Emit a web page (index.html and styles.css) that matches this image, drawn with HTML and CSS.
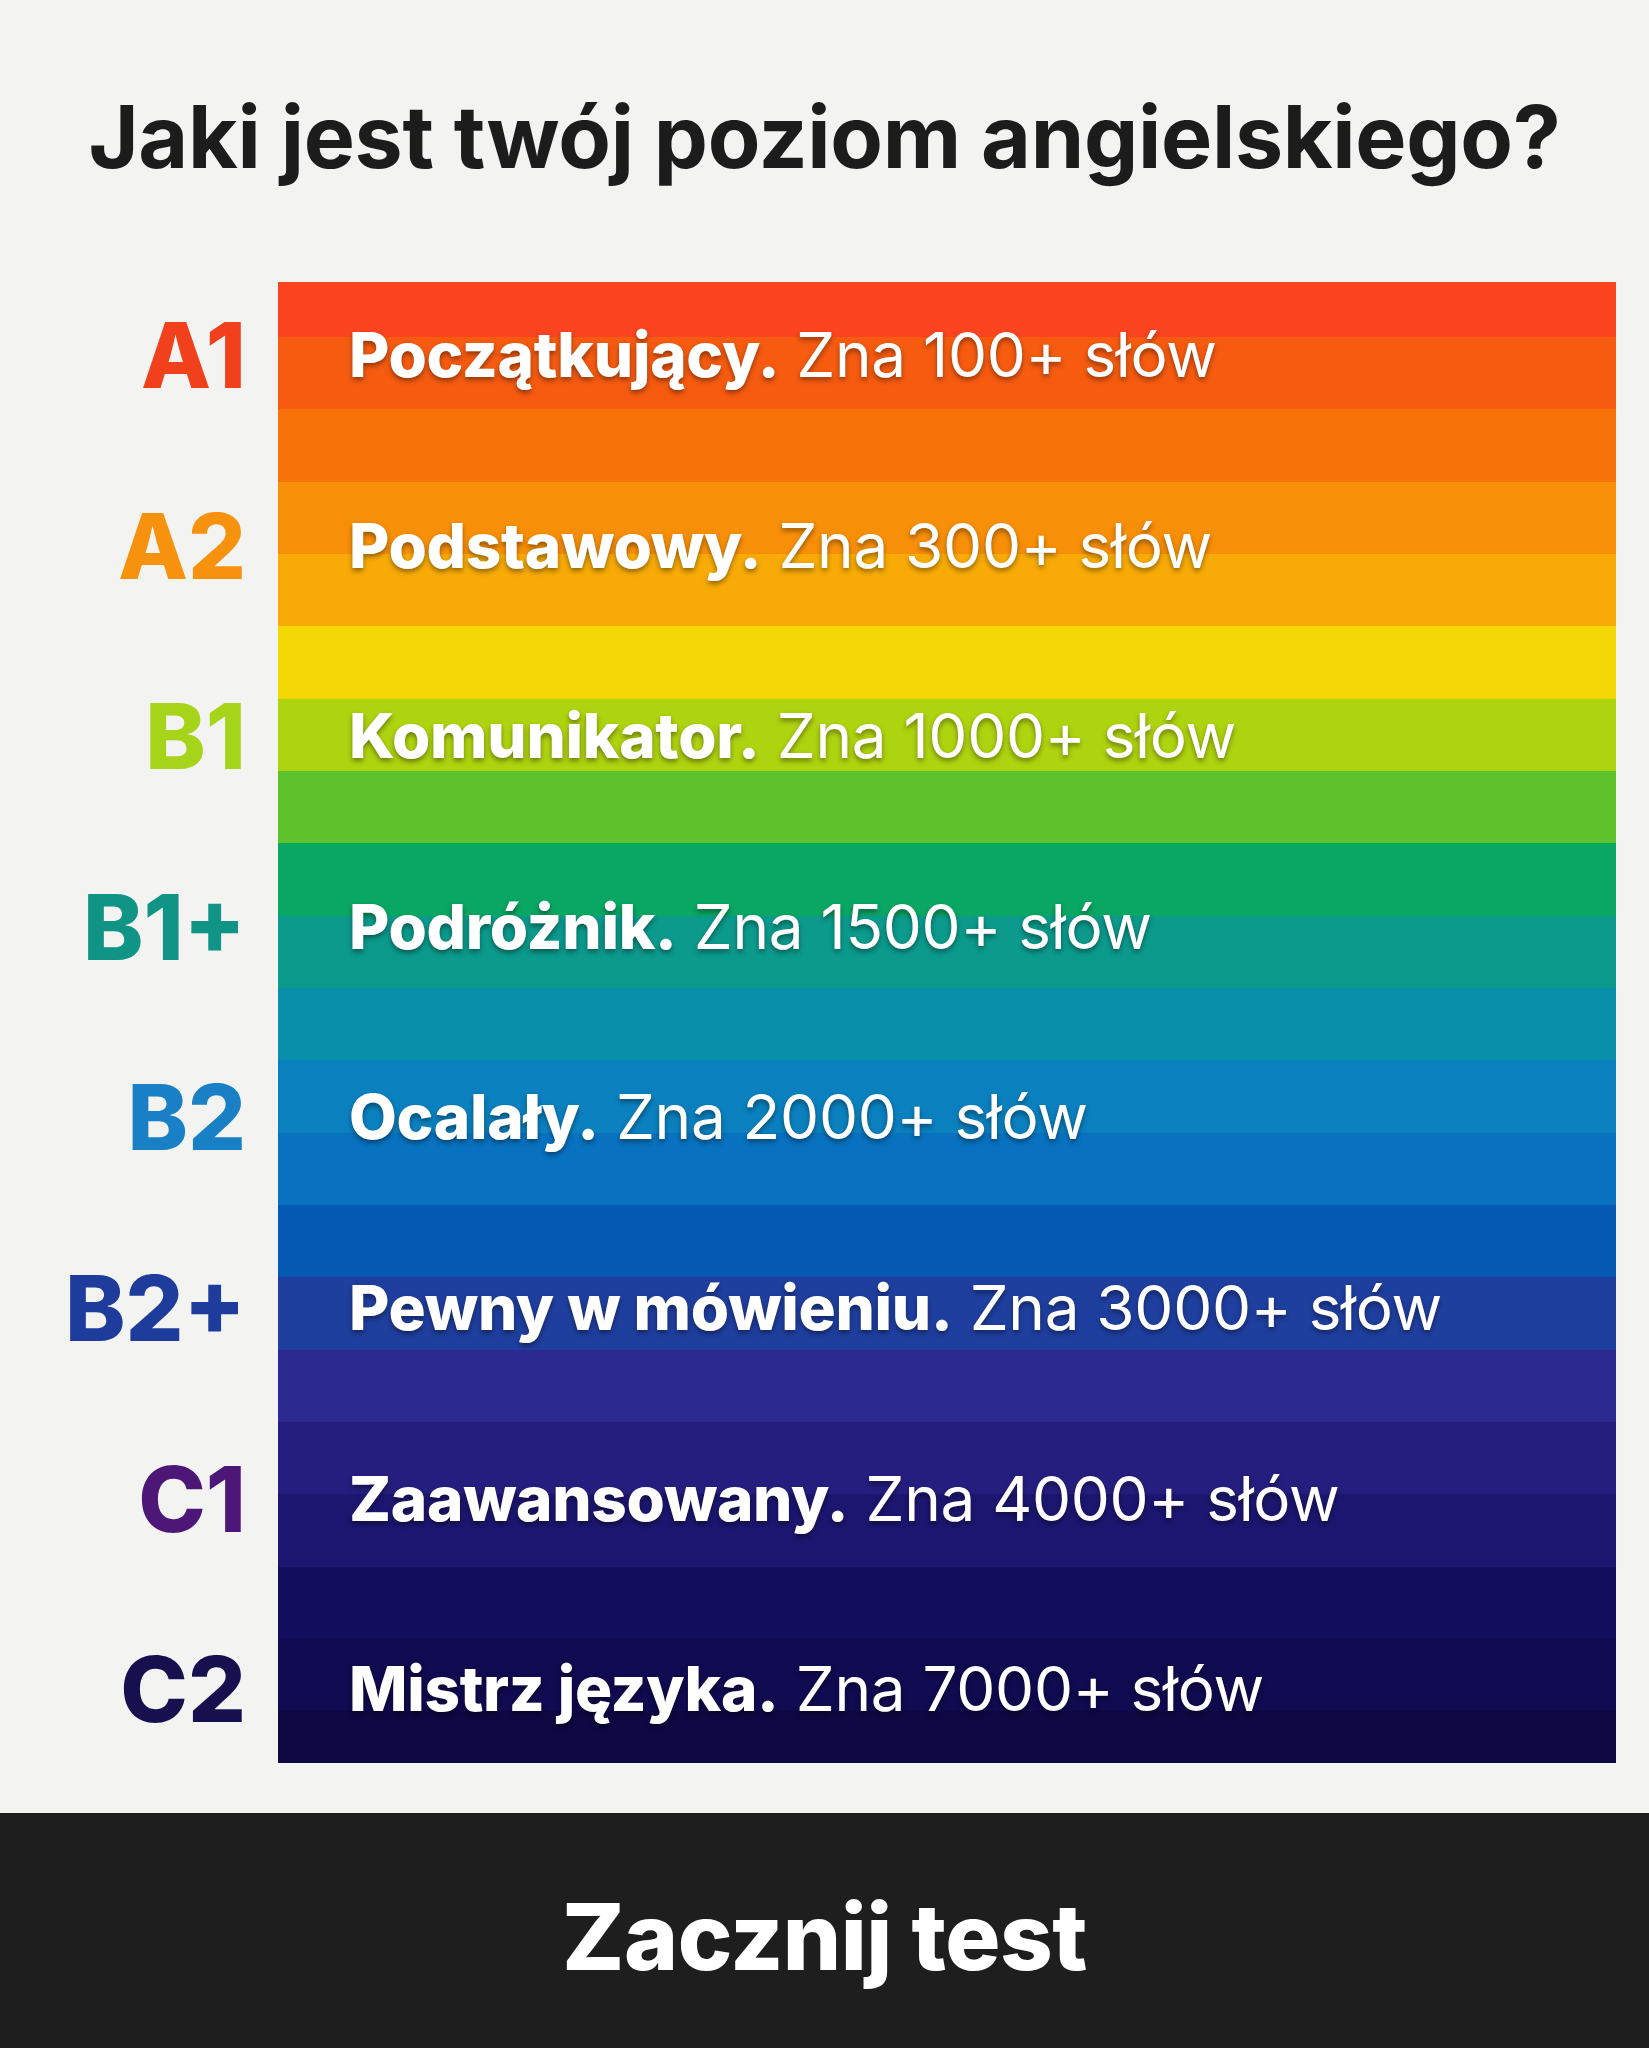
FILE: index.html
```html
<!DOCTYPE html>
<html lang="pl">
<head>
<meta charset="utf-8">
<title>Jaki jest twój poziom angielskiego?</title>
<link rel="stylesheet" href="styles.css">
</head>
<body>
<main class="page">
  <h1 class="title">Jaki jest twój poziom angielskiego?</h1>
  <section class="chart">
    <div class="labels">
      <div class="label a1">A1</div>
      <div class="label a2">A2</div>
      <div class="label b1">B1</div>
      <div class="label b1p">B1+</div>
      <div class="label b2">B2</div>
      <div class="label b2p">B2+</div>
      <div class="label c1">C1</div>
      <div class="label c2">C2</div>
    </div>
    <div class="band">
      <div class="row"><b>Początkujący.</b> Zna 100+ słów</div>
      <div class="row"><b>Podstawowy.</b> Zna 300+ słów</div>
      <div class="row"><b>Komunikator.</b> Zna 1000+ słów</div>
      <div class="row"><b>Podróżnik.</b> Zna 1500+ słów</div>
      <div class="row"><b>Ocalały.</b> Zna 2000+ słów</div>
      <div class="row"><b>Pewny w mówieniu.</b> Zna 3000+ słów</div>
      <div class="row"><b>Zaawansowany.</b> Zna 4000+ słów</div>
      <div class="row"><b>Mistrz języka.</b> Zna 7000+ słów</div>
    </div>
  </section>
  <footer class="cta">
    <span class="cta-text">Zacznij test</span>
  </footer>
</main>
</body>
</html>
```
FILE: styles.css
```css
html, body {
  margin: 0;
  padding: 0;
  background: #f3f3f2;
}
.page {
  display: flex;
  flex-direction: column;
  min-height: 2048px;
  font-family: Inter, "Noto Sans", "Liberation Sans", sans-serif;
}
.title {
  margin: 0;
  padding-top: 95px;
  height: 84px;
  font-size: 86px;
  line-height: 84px;
  font-weight: 700;
  color: #1c1c1c;
  text-align: center;
  letter-spacing: -0.3px;
}
.chart {
  display: flex;
  margin-top: 103px;
  height: 1481px;
}
.labels {
  width: 246px;
  display: flex;
  flex-direction: column;
  gap: 90.6px;
  padding: 23px 0 24px;
  box-sizing: border-box;
}
.label {
  height: 100px;
  line-height: 100px;
  font-size: 91px;
  font-weight: 800;
  text-align: right;
  letter-spacing: 0;
}
.a1 { color: #f1401c; }
.a2 { color: #f7920f; }
.b1 { color: #a6d41a; }
.b1p { color: #0f9486; }
.b2 { color: #1a80c6; }
.b2p { color: #1e3c9c; }
.c1 { color: #4d1778; }
.c2 { color: #17104f; }
.band {
  margin-left: 32px;
  width: 1338px;
  display: flex;
  flex-direction: column;
  gap: 90.6px;
  padding: 23px 0 24px 71px;
  box-sizing: border-box;
  background: linear-gradient(to bottom,
    #fc4420 0 55px,
    #f65b10 55px 127px,
    #f7730a 127px 200px,
    #f88f08 200px 272px,
    #f8ab06 272px 344px,
    #f4d806 344px 417px,
    #aed30f 417px 489px,
    #5ec22a 489px 561px,
    #0aa663 561px 634px,
    #0b9a8c 634px 706px,
    #0a8fab 706px 778px,
    #0a80bf 778px 851px,
    #0872c0 851px 923px,
    #0659b3 923px 995px,
    #1f3f9f 995px 1068px,
    #2c2a91 1068px 1140px,
    #261e7e 1140px 1212px,
    #1c1670 1212px 1285px,
    #130d5d 1285px 1357px,
    #100a50 1357px 1429px,
    #0d0842 1429px 1481px);
}
.row {
  height: 100px;
  line-height: 100px;
  font-size: 62px;
  font-weight: 400;
  color: #ffffff;
  white-space: nowrap;
  text-shadow: 0 3px 5px rgba(0, 0, 0, 0.4);
  letter-spacing: -0.3px;
}
.row b {
  font-weight: 800;
}
.cta {
  margin-top: 50px;
  flex: 1;
  background: #1e1e1e;
  display: flex;
  justify-content: center;
  align-items: center;
  padding-top: 12px;
}
.cta-text {
  color: #ffffff;
  font-size: 92px;
  font-weight: 800;
  letter-spacing: -0.5px;
}
```
